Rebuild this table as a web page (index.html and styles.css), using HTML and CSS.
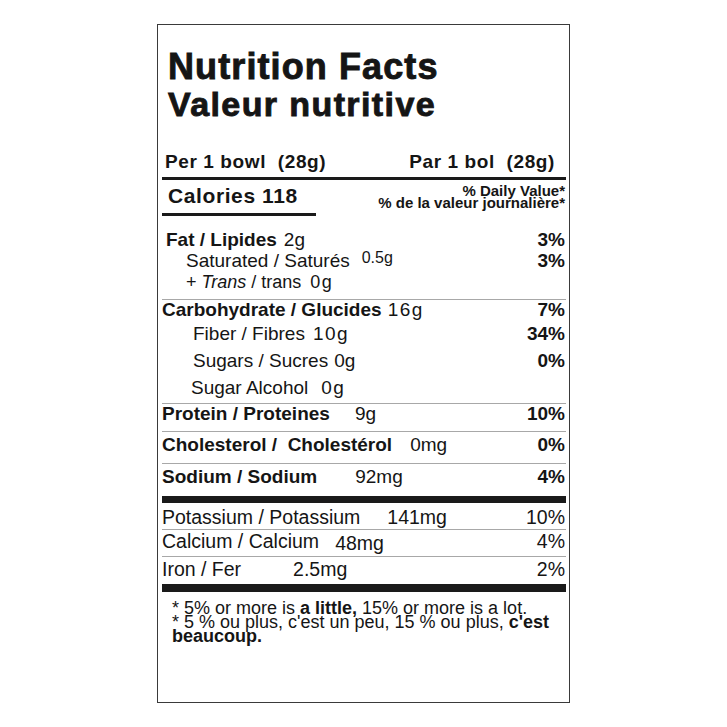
FILE: index.html
```html
<!DOCTYPE html>
<html lang="en">
<head>
<meta charset="utf-8">
<title>Nutrition Facts</title>
<link rel="stylesheet" href="styles.css">
</head>
<body>
<div class="label">
  <div class="title">
    <div class="title-en">Nutrition Facts</div>
    <div class="title-fr">Valeur nutritive</div>
  </div>
  <div class="serving">
    <span>Per 1 bowl&nbsp; (28g)</span>
    <span>Par 1 bol&nbsp; (28g)</span>
  </div>
  <div class="calrow">
    <div class="calories">Calories 118</div>
    <div class="dv">
      <div>% Daily Value*</div>
      <div>% de la valeur journalière*</div>
    </div>
  </div>

  <div class="section fat">
    <div class="row h21 ind4"><span class="b">Fat / Lipides</span><span class="val g7">2g</span><span class="pct b">3%</span></div>
    <div class="row h21 ind24"><span>Saturated / Saturés</span><span class="val small g10">0.5g</span><span class="pct b">3%</span></div>
    <div class="row h21 ind24 f18"><span>+ <i>Trans</i> / trans</span><span class="val g9 sp">0g</span></div>
  </div>

  <div class="section carb">
    <div class="row h20"><span class="b">Carbohydrate / Glucides</span><span class="val g6 sp">16g</span><span class="pct b">7%</span></div>
    <div class="row h27 ind31"><span>Fiber / Fibres</span><span class="val g8 sp">10g</span><span class="pct b">34%</span></div>
    <div class="row h27 ind31"><span>Sugars / Sucres</span><span class="val g3">0g</span><span class="pct b">0%</span></div>
    <div class="row h27 ind29"><span>Sugar Alcohol</span><span class="val g13 sp">0g</span></div>
  </div>

  <div class="section protein">
    <div class="row h20"><span class="b">Protein / Proteines</span><span class="val g25">9g</span><span class="pct b">10%</span></div>
  </div>

  <div class="section chol">
    <div class="row h26"><span class="b">Cholesterol /&nbsp; Cholestérol</span><span class="val g18">0mg</span><span class="pct b">0%</span></div>
  </div>

  <div class="section sodium">
    <div class="row h26"><span class="b">Sodium / Sodium</span><span class="val g38">92mg</span><span class="pct b">4%</span></div>
  </div>

  <div class="section potassium">
    <div class="row h24 f20"><span>Potassium / Potassium</span><span class="val g27">141mg</span><span class="pct">10%</span></div>
  </div>

  <div class="section calcium">
    <div class="row h22 f20"><span>Calcium / Calcium</span><span class="val g16 low">48mg</span><span class="pct">4%</span></div>
  </div>

  <div class="section iron">
    <div class="row h22 f20"><span>Iron / Fer</span><span class="val g52">2.5mg</span><span class="pct">2%</span></div>
  </div>

  <div class="foot">
    * 5% or more is <b>a little,</b> 15% or more is a lot.<br>
    * 5 % ou plus, c'est un peu, 15 % ou plus, <b>c'est</b><br>
    <b>beaucoup.</b>
  </div>
</div>
</body>
</html>
```

FILE: styles.css
```css
html, body {
  margin: 0;
  padding: 0;
  background: #fff;
}

body {
  font-family: "Liberation Sans", Arial, sans-serif;
  color: #151515;
}

.label {
  margin: 24px 0 0 157px;
  width: 404px;
  height: 677px;
  padding: 0 3px 0 4px;
  border: 1px solid #3a3a3a;
  box-sizing: content-box;
}

.title {
  padding: 24px 0 0 6px;
  font-weight: 700;
  -webkit-text-stroke: 0.9px #151515;
}

.title-en {
  font-size: 36px;
  line-height: 36px;
  letter-spacing: 1.1px;
}

.title-fr {
  margin-top: 3px;
  font-size: 34px;
  line-height: 32px;
  letter-spacing: 1.4px;
}

.serving {
  display: flex;
  justify-content: space-between;
  padding: 32px 11px 5px 3px;
  font-size: 19px;
  line-height: 20px;
  font-weight: 700;
  letter-spacing: 0.6px;
  border-bottom: 3px solid #1a1a1a;
}

.calrow {
  display: flex;
  justify-content: space-between;
  align-items: flex-start;
}

.calories {
  width: 148px;
  padding: 5px 0 6px 6px;
  font-size: 21px;
  line-height: 22px;
  font-weight: 700;
  letter-spacing: 0.6px;
  border-bottom: 3px solid #1a1a1a;
}

.dv {
  margin-top: 5px;
  padding-right: 1px;
  text-align: right;
  font-size: 15px;
  line-height: 12px;
  font-weight: 700;
}

.section {
  border-bottom: 1px solid #a8a8a8;
}

.fat { margin-top: 13px; padding-bottom: 6px; }
.carb { padding-bottom: 2px; }
.protein { padding-bottom: 7px; }
.chol { padding-bottom: 5px; }
.sodium { padding-bottom: 6px; border-bottom: 7px solid #1a1a1a; }
.potassium { padding-top: 2px; }
.calcium { padding-bottom: 4px; }
.iron { padding-top: 1px; padding-bottom: 4px; border-bottom: 8px solid #1a1a1a; }

.row {
  display: flex;
  align-items: baseline;
  font-size: 19px;
  white-space: nowrap;
}

.h20 { line-height: 20px; }
.h21 { line-height: 21px; }
.h22 { line-height: 22px; }
.h24 { line-height: 24px; }
.h26 { line-height: 26px; }
.h27 { line-height: 27px; }

.ind4 { padding-left: 4px; }
.ind24 { padding-left: 24px; }
.ind29 { padding-left: 29px; }
.ind31 { padding-left: 31px; }

.f18 { font-size: 18px; }
.f20 { font-size: 19.5px; }

.b { font-weight: 700; }

.val { font-weight: 400; }
.val.sp { letter-spacing: 1.5px; }
.val.small { font-size: 16px; position: relative; top: -4px; }
.val.low { position: relative; top: 2px; }

.g3 { margin-left: 6px; }
.g6 { margin-left: 6px; }
.g7 { margin-left: 7px; }
.g8 { margin-left: 8px; }
.g9 { margin-left: 9px; }
.g10 { margin-left: 12px; }
.g13 { margin-left: 13px; }
.g16 { margin-left: 16px; }
.g18 { margin-left: 18px; }
.g25 { margin-left: 25px; }
.g27 { margin-left: 27px; }
.g38 { margin-left: 38px; }
.g52 { margin-left: 52px; }

.pct {
  margin-left: auto;
  padding-right: 1px;
}

.row .pct.b { font-size: 19px; }

.foot {
  padding: 9px 0 0 10px;
  font-size: 18px;
  line-height: 14px;
}
```
